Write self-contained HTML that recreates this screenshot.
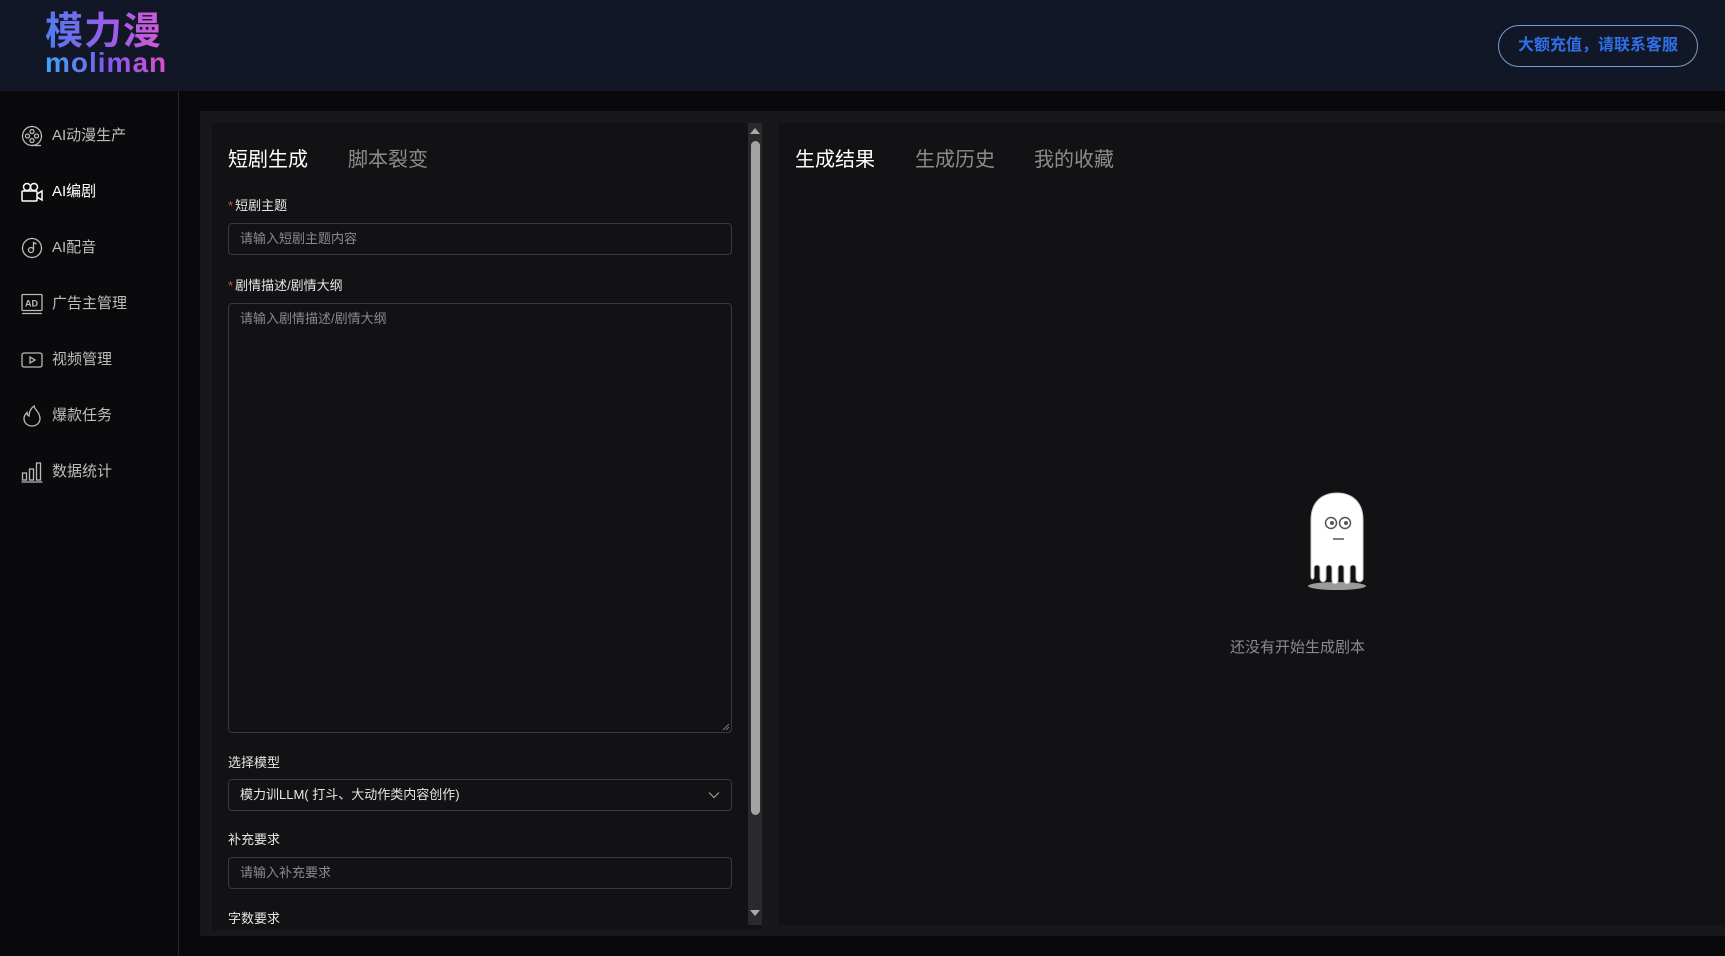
<!DOCTYPE html>
<html><head><meta charset="utf-8"><style>
*{box-sizing:border-box;margin:0;padding:0}
body{width:1725px;height:956px;background:#09090b;font-family:"Liberation Sans","Noto Sans CJK SC",sans-serif;position:relative;overflow:hidden;color:#ddd}
.a{position:absolute}
.hdr{left:0;top:0;width:1725px;height:91px;background:#111726}
.logo1{left:45px;top:10px;font-size:38px;font-weight:bold;line-height:44px;letter-spacing:1px;background:linear-gradient(90deg,#4f7cf0,#9a5ce8 55%,#d45bd6);-webkit-background-clip:text;color:transparent}
.logo2{left:45px;top:48px;font-size:28px;font-weight:bold;line-height:30px;letter-spacing:1px;background:linear-gradient(90deg,#3ea8f5,#7a5cf0 50%,#e04fc9);-webkit-background-clip:text;color:transparent}
.btn{left:1498px;top:25px;width:200px;height:42px;border:1.5px solid #7a9ccc;border-radius:21px;color:#2f6fe8;font-weight:bold;font-size:16px;text-align:center;line-height:39px}
.side{left:0;top:91px;width:179px;height:865px;background:#0a0a0c;border-right:1px solid #26262a}
.it{left:21px;height:24px;font-size:15px;color:#bdbdbd;line-height:24px}
.it svg{position:absolute;left:0;top:1px}
.it span{position:absolute;left:31px;white-space:nowrap}
.main{left:200px;top:111px;width:1525px;height:825px;background:#18181a}
.card{background:#121214}
.lbl{font-size:13px;color:#e6e6e6;left:228px}
.lbl b{color:#e0533d;font-weight:normal;margin-right:2px}
.inp{left:228px;width:504px;border:1px solid #3a3a3e;border-radius:4px;font-size:13px;color:#8a8a8e;padding-left:11px}
.tab{font-size:20px;top:147px;line-height:26px}
</style></head><body>
<div class="a hdr"></div>
<div class="a logo1">模力漫</div>
<div class="a logo2">moliman</div>
<div class="a btn">大额充值，请联系客服</div>

<div class="a side"></div>
<div class="a it" style="top:124px"><svg width="22" height="22" viewBox="0 0 22 22" fill="none" stroke="#bbb" stroke-width="1.3"><circle cx="11" cy="11" r="9.5"/><circle cx="11" cy="6.5" r="2"/><circle cx="6.5" cy="11" r="2"/><circle cx="15.5" cy="11" r="2"/><circle cx="11" cy="15.5" r="2"/><path d="M11 20.5h9"/></svg><span>AI动漫生产</span></div>
<div class="a it" style="top:180px;color:#fff"><svg width="22" height="22" viewBox="0 0 22 22" fill="none" stroke="#fff" stroke-width="1.5"><circle cx="6" cy="6" r="3.5"/><circle cx="13" cy="6" r="3.5"/><rect x="1" y="10" width="15" height="10" rx="1"/><path d="M16 13l5-3v9l-5-3"/></svg><span>AI编剧</span></div>
<div class="a it" style="top:236px"><svg width="22" height="22" viewBox="0 0 22 22" fill="none" stroke="#bbb" stroke-width="1.3"><circle cx="11" cy="11" r="9.5"/><circle cx="10" cy="13" r="2.5"/><path d="M12.5 13V5.5l3 1.5"/></svg><span>AI配音</span></div>
<div class="a it" style="top:292px"><svg width="22" height="22" viewBox="0 0 22 22" fill="none" stroke="#bbb" stroke-width="1.3"><rect x="1" y="1.5" width="20" height="16" rx="1"/><path d="M1 20.5h20"/><text x="4" y="13.5" font-size="9" fill="#bbb" stroke="none" font-family="Liberation Sans" font-weight="bold">AD</text></svg><span>广告主管理</span></div>
<div class="a it" style="top:348px"><svg width="22" height="22" viewBox="0 0 22 22" fill="none" stroke="#bbb" stroke-width="1.3"><rect x="1" y="4" width="20" height="14" rx="2"/><path d="M9 8v6l5-3z"/></svg><span>视频管理</span></div>
<div class="a it" style="top:404px"><svg width="22" height="22" viewBox="0 0 22 22" fill="none" stroke="#bbb" stroke-width="1.3"><path d="M11 21c-4.5 0-8-3-8-7.5 0-3 2-5 3-6 0 2 1 3 2 3.5C8 7 10 3 13 1c0 3 6 6 6 12.5 0 4.5-3.5 7.5-8 7.5z"/></svg><span>爆款任务</span></div>
<div class="a it" style="top:460px"><svg width="22" height="22" viewBox="0 0 22 22" fill="none" stroke="#bbb" stroke-width="1.3"><rect x="1.5" y="12" width="4" height="7"/><rect x="8.5" y="8" width="4" height="11"/><rect x="15.5" y="2" width="4" height="17"/><path d="M0.5 21h21"/></svg><span>数据统计</span></div>

<div class="a main"></div>
<div class="a card" style="left:212px;top:123px;width:550px;height:807px"></div>
<div class="a card" style="left:779px;top:123px;width:946px;height:802px"></div>

<div class="a tab" style="left:228px;color:#fff">短剧生成</div>
<div class="a tab" style="left:348px;color:#8c8c8c">脚本裂变</div>

<div class="a lbl" style="top:195px"><b>*</b>短剧主题</div>
<div class="a inp" style="top:223px;height:32px;line-height:30px">请输入短剧主题内容</div>
<div class="a lbl" style="top:275px"><b>*</b>剧情描述/剧情大纲</div>
<div class="a inp" style="top:303px;height:430px;padding-top:6px;line-height:18px">请输入剧情描述/剧情大纲</div>
<svg class="a" style="left:722px;top:723px" width="8" height="8" viewBox="0 0 8 8" stroke="#777" stroke-width="1"><path d="M1 7L7 1M4 7L7 4"/></svg>
<div class="a lbl" style="top:752px">选择模型</div>
<div class="a inp" style="top:779px;height:32px;line-height:30px;color:#e6e6e6">模力训LLM( 打斗、大动作类内容创作)</div>
<svg class="a" style="left:708px;top:791px" width="12" height="8" viewBox="0 0 12 8" fill="none" stroke="#999" stroke-width="1.2"><path d="M1 1.5l5 5 5-5"/></svg>
<div class="a lbl" style="top:829px">补充要求</div>
<div class="a inp" style="top:857px;height:32px;line-height:30px">请输入补充要求</div>
<div class="a lbl" style="top:908px">字数要求</div>

<div class="a" style="left:748px;top:123px;width:14px;height:802px;background:#2a2a2c"></div>
<div class="a" style="left:751px;top:141px;width:9px;height:674px;background:#a3a3a3;border-radius:5px"></div>
<svg class="a" style="left:750px;top:128px" width="10" height="6"><path d="M0 6L5 0L10 6z" fill="#aaa"/></svg>
<svg class="a" style="left:750px;top:910px" width="10" height="6"><path d="M0 0L5 6L10 0z" fill="#aaa"/></svg>

<div class="a tab" style="left:795px;color:#fff">生成结果</div>
<div class="a tab" style="left:915px;color:#8c8c8c">生成历史</div>
<div class="a tab" style="left:1034px;color:#8c8c8c">我的收藏</div>

<svg class="a" style="left:1306px;top:490px" width="62" height="102" viewBox="0 0 62 102">
<ellipse cx="31" cy="96" rx="29" ry="4" fill="#9a9a9a"/>
<path d="M5 30C5 12 16 3 31 3S57 12 57 30V88C57 93 50 93 50 88V78C50 74 44 74 44 78V90C44 95 38 95 38 90V78C38 74 32 74 32 78V90C32 95 26 95 26 90V78C26 74 20 74 20 78V88C20 93 14 93 14 88V78C14 74 8 74 8 78V86C8 90 5 90 5 86z" fill="#fff" stroke="#ccc" stroke-width="1"/>
<circle cx="25" cy="33" r="5.5" fill="#fff" stroke="#555" stroke-width="1.5"/><circle cx="26" cy="33" r="2" fill="#555"/>
<circle cx="39" cy="33" r="5.5" fill="#fff" stroke="#555" stroke-width="1.5"/><circle cx="40" cy="33" r="2" fill="#555"/>
<path d="M27 49h11" stroke="#555" stroke-width="1.5"/>
</svg>
<div class="a" style="left:1230px;top:636px;font-size:15px;color:#8a8a8e;white-space:nowrap">还没有开始生成剧本</div>
</body></html>
